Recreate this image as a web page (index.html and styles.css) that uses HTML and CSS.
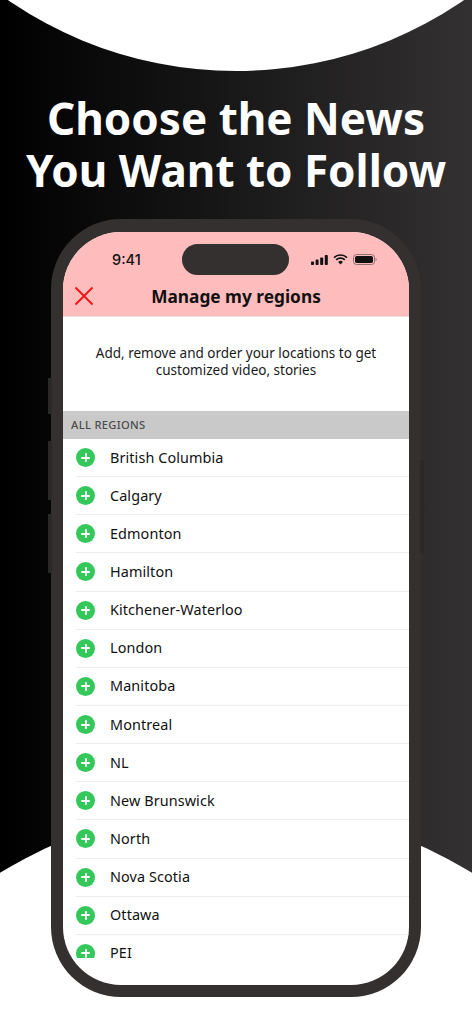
FILE: index.html
```html
<!doctype html>
<html lang="en">
  <head>
    <meta charset="UTF-8" />
    <meta name="viewport" content="width=device-width, initial-scale=1.0" />
    <title>Choose the News You Want to Follow</title>
    <link rel="stylesheet" href="styles.css">
  </head>
  <body>
    <div class="poster">
      <div class="blob blob-top"></div>
      <div class="blob blob-bottom"></div>

      <h1 class="headline">Choose the News<br>You Want to Follow</h1>

      <div class="phone">
        <span class="side-btn btn-mute"></span>
        <span class="side-btn btn-up"></span>
        <span class="side-btn btn-down"></span>
        <span class="side-btn btn-power"></span>

        <div class="screen">
          <div class="top-area">
            <div class="status-bar">
              <span class="clock">9:41</span>
              <span class="island"></span>
              <span class="status-icons">
                <svg width="17" height="10" viewBox="0 0 17 10">
                  <rect x="0" y="6.5" width="3" height="3.5" rx="0.8" fill="#111" />
                  <rect x="4.6" y="4.6" width="3" height="5.4" rx="0.8" fill="#111" />
                  <rect x="9.2" y="2.4" width="3" height="7.6" rx="0.8" fill="#111" />
                  <rect x="13.8" y="0" width="3" height="10" rx="0.8" fill="#111" />
                </svg>
                <svg width="15" height="11" viewBox="0 0 15 11">
                  <path d="M1 3.6a9.4 9.4 0 0 1 13 0M3.2 5.9a6.2 6.2 0 0 1 8.6 0" fill="none" stroke="#111" stroke-width="1.7" />
                  <path d="M5.1 7.9a3.4 3.4 0 0 1 4.8 0L7.5 10.6z" fill="#111" />
                </svg>
                <svg width="24" height="11" viewBox="0 0 24 11">
                  <rect x="0.5" y="0.5" width="21" height="10" rx="3" fill="none" stroke="#8d6f70" />
                  <rect x="2" y="2" width="18" height="7" rx="1.8" fill="#111" />
                  <path d="M22.6 3.8a1.9 1.9 0 0 1 0 3.4z" fill="#8d6f70" />
                </svg>
              </span>
            </div>
            <div class="nav-bar">
              <svg class="close-icon" width="20" height="20" viewBox="0 0 20 20">
                <path d="M1.5 1.5L18.5 18.5M18.5 1.5L1.5 18.5" fill="none" stroke="#f01414" stroke-width="1.9" />
              </svg>
              <span class="nav-title">Manage my regions</span>
            </div>
          </div>

          <p class="intro">Add, remove and order your locations to get customized video, stories</p>

          <div class="section-label">ALL REGIONS</div>

          <ul class="region-list" id="regions"></ul>
        </div>
      </div>
    </div>

    <script>
      const regions = [
        "British Columbia",
        "Calgary",
        "Edmonton",
        "Hamilton",
        "Kitchener-Waterloo",
        "London",
        "Manitoba",
        "Montreal",
        "NL",
        "New Brunswick",
        "North",
        "Nova Scotia",
        "Ottawa",
        "PEI",
      ];

      const list = document.getElementById("regions");

      regions.forEach((name) => {
        const row = document.createElement("li");
        row.className = "region";
        row.innerHTML =
          '<span class="add-icon"></span><span class="region-name"></span>';
        row.querySelector(".region-name").textContent = name;
        list.appendChild(row);
      });
    </script>
  </body>
</html>
```

FILE: styles.css
```css
* {
  margin: 0;
  padding: 0;
  box-sizing: border-box;
}

body {
  width: 472px;
  height: 1024px;
  overflow: hidden;
  font-family: "Noto Sans", "Open Sans", sans-serif;
}

.poster {
  position: relative;
  width: 472px;
  height: 1024px;
  padding-top: 92px;
  overflow: hidden;
  background: linear-gradient(90deg, #000 0%, #333131 100%);
}

.blob {
  position: absolute;
  border-radius: 50%;
  background-color: #fff;
}

.blob-top {
  left: -166px;
  top: -733px;
  width: 804px;
  height: 804px;
}

.blob-bottom {
  left: -214px;
  top: 806px;
  width: 900px;
  height: 900px;
}

.headline {
  position: relative;
  color: #fff;
  font-size: 44px;
  line-height: 52px;
  font-weight: 700;
  text-align: center;
  white-space: nowrap;
}

.phone {
  position: relative;
  width: 370px;
  height: 778px;
  margin: 23px auto 0;
  padding: 13px 12px 12px;
  border-radius: 70px;
  background-color: #343030;
}

.side-btn {
  position: absolute;
  width: 4px;
  background-color: #2b2828;
}

.btn-mute {
  left: -3px;
  top: 159px;
  height: 36px;
}

.btn-up {
  left: -3px;
  top: 222px;
  height: 59px;
}

.btn-down {
  left: -3px;
  top: 295px;
  height: 59px;
}

.btn-power {
  right: -3px;
  top: 241px;
  height: 93px;
}

.screen {
  height: 753px;
  overflow: hidden;
  border-radius: 58px;
  background-color: #fff;
}

.top-area {
  height: 85px;
  background-color: #ffbcbc;
  border-bottom: 1px solid #f0dcdc;
}

.status-bar {
  display: flex;
  align-items: center;
  height: 44px;
  padding: 11px 30px 0 49px;
}

.clock {
  width: 70px;
  font-size: 14.5px;
  font-weight: 500;
  color: #111;
  font-family: Inter, sans-serif;
}

.island {
  width: 107px;
  height: 31px;
  border-radius: 16px;
  background-color: #343030;
}

.status-icons {
  display: flex;
  align-items: center;
  gap: 5px;
  margin-left: 22px;
}

.nav-bar {
  position: relative;
  height: 40px;
  display: flex;
  align-items: center;
  justify-content: center;
}

.close-icon {
  position: absolute;
  left: 11px;
  top: 10px;
}

.nav-title {
  font-size: 17.3px;
  font-weight: 700;
  color: #111;
}

.intro {
  height: 94px;
  padding: 28px 18px 0;
  font-size: 13.5px;
  line-height: 16.5px;
  text-align: center;
  color: #1a1a1a;
}

.section-label {
  height: 28px;
  padding-left: 8px;
  font-size: 11.2px;
  line-height: 28px;
  font-weight: 500;
  letter-spacing: 0.3px;
  color: #4c4c4c;
  background-color: #c9c9c9;
}

.region-list {
  height: 519px;
  overflow: hidden;
  list-style: none;
  padding-left: 13px;
}

.region {
  display: flex;
  align-items: center;
  height: 38.15px;
  border-bottom: 1px solid #ececec;
}

.add-icon {
  position: relative;
  flex: none;
  width: 19px;
  height: 19px;
  border-radius: 50%;
  background-color: #34c759;
}

.add-icon::before,
.add-icon::after {
  content: "";
  position: absolute;
  background-color: #fff;
  border-radius: 1px;
}

.add-icon::before {
  left: 5px;
  top: 8.5px;
  width: 9px;
  height: 2px;
}

.add-icon::after {
  left: 8.5px;
  top: 5px;
  width: 2px;
  height: 9px;
}

.region-name {
  margin-left: 15px;
  margin-bottom: 1px;
  font-size: 14.4px;
  letter-spacing: 0.1px;
  color: #111;
}
```
